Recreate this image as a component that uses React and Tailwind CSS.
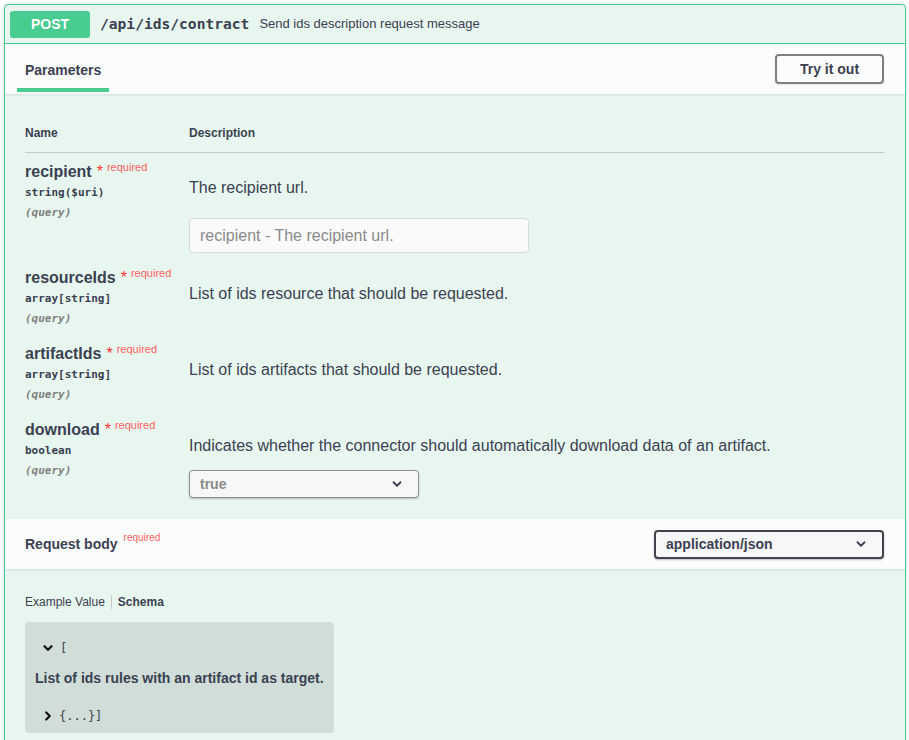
const sans = { fontFamily: '"Liberation Sans", Arial, sans-serif' };
const mono = { fontFamily: '"DejaVu Sans Mono", "Liberation Mono", monospace' };

function Chevron({ className = '', width = 2.6 }) {
  return (
    <svg viewBox="0 0 20 20" className={className} fill="none" stroke="currentColor" strokeWidth={width} strokeLinecap="round" strokeLinejoin="round">
      <path d="M5 7.5l5 5 5-5" />
    </svg>
  );
}

function ParamRow({ name, type, desc, children, last }) {
  return (
    <div className={`flex pt-[9px] ${last ? 'pb-0' : 'pb-[6px]'}`}>
      <div className="w-[164px] shrink-0">
        <div className="flex items-start leading-[20px]">
          <span className="text-[16px] font-bold text-[#3b4151]">{name}</span>
          <span className="text-[16px] text-[#ff3333] ml-[5px] leading-[20px]">*</span>
          <span className="text-[11px] text-[#ff6060] ml-[4px] leading-[14px] -mt-[2px]">required</span>
        </div>
        <div className="text-[11px] font-semibold text-[#3b4151] leading-[20px] mt-[1px]" style={mono}>{type}</div>
        <div className="text-[11px] italic text-[#808080] leading-[20px] font-semibold" style={mono}>(query)</div>
      </div>
      <div className="flex-1 pt-[16px]">
        <p className="text-[16px] text-[#3b4151] leading-[20px]">{desc}</p>
        {children}
      </div>
    </div>
  );
}

export default function App() {
  return (
    <div className="min-h-[740px] bg-white pt-[4px] pl-[4px] pr-[3px]" style={sans}>
      <div className="border border-[#49cc90] rounded-[4px] bg-[#e8f6f0] shadow-[0_0_3px_rgba(0,0,0,0.19)] overflow-hidden">
        {/* summary */}
        <div className="flex items-center h-[39px] px-[5px] border-b border-[#49cc90]">
          <span className="w-[80px] h-[27px] rounded-[3px] bg-[#49cc90] text-white text-[14px] font-bold flex items-center justify-center">POST</span>
          <span className="ml-[10px] text-[14.6px] font-bold text-[#3b4151]" style={mono}>/api/ids/contract</span>
          <span className="ml-[10px] text-[13px] text-[#3b4151]">Send ids description request message</span>
        </div>

        {/* parameters header */}
        <div className="flex items-center justify-between h-[50px] pl-[12px] pr-[21px] bg-[#fbfdfc] shadow-[0_1px_2px_rgba(0,0,0,0.1)]">
          <div className="self-stretch flex flex-col justify-end">
            <div className="px-[8px] text-[14px] font-bold text-[#3b4151] leading-[20px] pb-[8px]">Parameters</div>
            <div className="h-[4px] bg-[#49cc90] mb-[2px]" />
          </div>
          <button className="w-[109px] h-[30px] border-2 border-[#808080] rounded-[4px] text-[14px] font-bold text-[#3b4151] shadow-[0_1px_2px_rgba(0,0,0,0.1)]">Try it out</button>
        </div>

        {/* parameters table */}
        <div className="pl-[20px] pr-[21px] pt-[31px] pb-[21px]">
          <div className="flex border-b border-[#c5cbc8] pb-[11px] text-[12px] font-bold text-[#3b4151] leading-[16px]">
            <div className="w-[164px]">Name</div>
            <div>Description</div>
          </div>
          <ParamRow name="recipient" type="string($uri)" desc="The recipient url.">
            <div className="mt-[20px] w-[340px] h-[35px] rounded-[4px] border border-[#d9d9d9] bg-[#fafafa] flex items-center px-[10px] text-[16px] text-[#8a8a8a]">
              recipient - The recipient url.
            </div>
          </ParamRow>
          <ParamRow name="resourceIds" type="array[string]" desc="List of ids resource that should be requested." />
          <ParamRow name="artifactIds" type="array[string]" desc="List of ids artifacts that should be requested." />
          <ParamRow name="download" type="boolean" desc="Indicates whether the connector should automatically download data of an artifact." last>
            <div className="mt-[14px] w-[230px] h-[28px] rounded-[4px] border border-[#8f8f8f] bg-[#f7f7f7] shadow-[0_1px_2px_rgba(0,0,0,0.25)] flex items-center justify-between pl-[10px] pr-[14px] text-[14px] font-bold text-[#8a8a8a]">
              <span>true</span>
              <Chevron className="w-[14px] h-[14px] text-[#3b4151]" />
            </div>
          </ParamRow>
        </div>

        {/* request body header */}
        <div className="flex items-center justify-between h-[50px] pl-[20px] pr-[21px] bg-[#fbfdfc] shadow-[0_1px_2px_rgba(0,0,0,0.1)]">
          <div className="flex items-start">
            <span className="text-[14px] font-bold text-[#3b4151]">Request body</span>
            <span className="text-[10px] text-[#ff6060] ml-[6px] -mt-[4px]">required</span>
          </div>
          <div className="w-[230px] h-[29px] rounded-[4px] border-2 border-[#41444e] bg-[#f7f7f7] shadow-[0_1px_2px_rgba(0,0,0,0.25)] flex items-center justify-between pl-[10px] pr-[14px] text-[14px] font-bold text-[#3b4151]">
            <span>application/json</span>
            <Chevron className="w-[14px] h-[14px]" />
          </div>
        </div>

        {/* request body content */}
        <div className="px-[20px] pt-[26px] pb-[10px]">
          <div className="flex items-center text-[12px] text-[#3b4151] leading-[14px]">
            <span>Example Value</span>
            <span className="w-px h-[14px] bg-[#c8c8c8] mx-[6px]" />
            <span className="font-bold">Schema</span>
          </div>
          <div className="mt-[13px] w-[309px] rounded-[4px] bg-[#d1ddd8] pl-[10px] pt-[18px] pb-[9px]">
            <div className="flex items-center pl-[6px] h-[16px]">
              <Chevron className="w-[14px] h-[14px] text-[#111]" width={3.2} />
              <span className="ml-[5px] text-[12px] text-[#3b4151]" style={mono}>[</span>
            </div>
            <div className="mt-[14px] text-[14px] font-bold text-[#3b4151] leading-[16px]">List of ids rules with an artifact id as target.</div>
            <div className="mt-[22px] flex items-center pl-[6px] h-[16px]">
              <Chevron className="w-[14px] h-[14px] text-[#111] -rotate-90" width={3.2} />
              <span className="ml-[4px] text-[12px] text-[#3b4151]" style={mono}>{'{...}]'}</span>
            </div>
          </div>
        </div>
      </div>
    </div>
  );
}
